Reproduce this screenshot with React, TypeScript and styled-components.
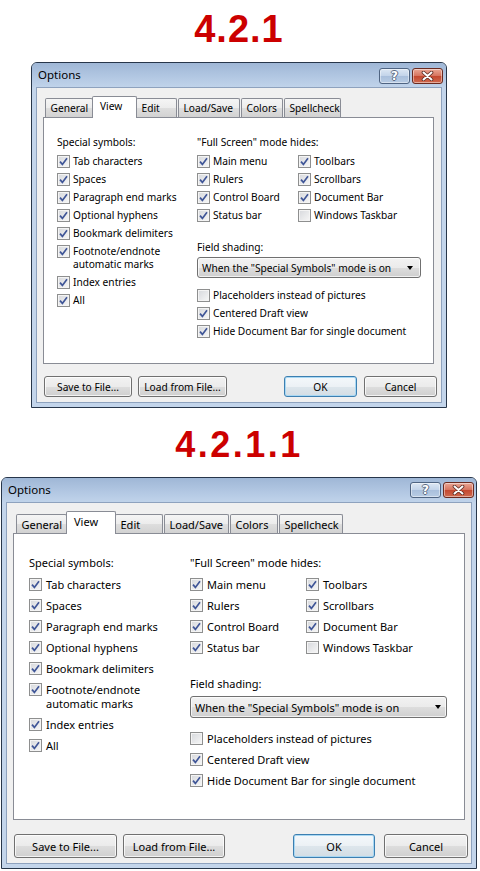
import React from 'react'
import styled, { createGlobalStyle } from 'styled-components'

type Size = 'sm' | 'lg'

interface Metrics {
  width: number
  font: number
  titleBtnTop: number
  titleBtnRight: number
  clientPadR: number
  stripH: number
  stripPadL: number
  inactiveH: number
  activeH: number
  tabs: number[]
  panelH: number
  panelPadT: number
  panelPadL: number
  leftColW: number
  subColW: number
  lineH: number
  rowPad: number
  cbGap: number
  fieldTop: number
  selectTop: number
  optsTop: number
  selectW: number
  selectH: number
  arrowPadR: number
  btnTop: number
  btnH: number
  save: number
  load: number
  leftGap: number
  ok: number
  cancel: number
  rightGap: number
}

const M: Record<Size, Metrics> = {
  sm: {
    width: 416,
    font: 10.2,
    titleBtnTop: 5,
    titleBtnRight: 3,
    clientPadR: 4,
    stripH: 21,
    stripPadL: 2,
    inactiveH: 19,
    activeH: 22,
    tabs: [48, 41, 41, 62, 42, 57],
    panelH: 247,
    panelPadT: 15,
    panelPadL: 13,
    leftColW: 140,
    subColW: 101,
    lineH: 13,
    rowPad: 2.5,
    cbGap: 3,
    fieldTop: 14,
    selectTop: 0,
    optsTop: 8,
    selectW: 224,
    selectH: 21,
    arrowPadR: 7,
    btnTop: 12,
    btnH: 21,
    save: 88,
    load: 89,
    leftGap: 6,
    ok: 73,
    cancel: 73,
    rightGap: 7,
  },
  lg: {
    width: 476,
    font: 11,
    titleBtnTop: 4,
    titleBtnRight: 2,
    clientPadR: 3,
    stripH: 22,
    stripPadL: 3,
    inactiveH: 19,
    activeH: 23,
    tabs: [51, 46, 48, 65, 48, 64],
    panelH: 287,
    panelPadT: 18,
    panelPadL: 15,
    leftColW: 161,
    subColW: 116,
    lineH: 14,
    rowPad: 3.5,
    cbGap: 4,
    fieldTop: 15,
    selectTop: 1,
    optsTop: 10,
    selectW: 257,
    selectH: 22,
    arrowPadR: 5,
    btnTop: 14,
    btnH: 24,
    save: 103,
    load: 102,
    leftGap: 6,
    ok: 82,
    cancel: 84,
    rightGap: 9,
  },
}

const GlobalStyle = createGlobalStyle`
  html, body {
    margin: 0;
    padding: 0;
    background: #ffffff;
  }
  body {
    font-family: "Noto Sans", "DejaVu Sans", sans-serif;
  }
`

const Page = styled.div`
  width: 480px;
  box-sizing: border-box;
  padding: 7px 2px 0 0;
  display: flex;
  flex-direction: column;
  align-items: center;
`

const Heading = styled.h1<{ $s: Size }>`
  margin: ${(p) => (p.$s === 'sm' ? '0 0 11px' : '15px 0 10px')};
  height: 44px;
  line-height: 44px;
  font-family: 'Liberation Sans', Arial, sans-serif;
  font-weight: bold;
  font-size: ${(p) => (p.$s === 'sm' ? 38 : 36)}px;
  letter-spacing: ${(p) => (p.$s === 'sm' ? 1 : 2.5)}px;
  color: #cc0000;
`

const Window = styled.div<{ $s: Size }>`
  width: ${(p) => M[p.$s].width}px;
  box-sizing: border-box;
  border: 1px solid #27364a;
  border-radius: 6px 6px 0 0;
  background: #c3d5eb;
  display: flex;
  flex-direction: column;
  color: #000;
  font-family: 'Noto Sans', 'DejaVu Sans', sans-serif;
`

const TitleBar = styled.div<{ $s: Size }>`
  height: 24px;
  display: flex;
  justify-content: space-between;
  align-items: flex-start;
  padding: 0 ${(p) => M[p.$s].titleBtnRight}px 0 6px;
  border-radius: 5px 5px 0 0;
  background: linear-gradient(#9fb7d6, #b3c8e3 60%, #c0d3ea);
`

const Title = styled.span`
  font-size: 11.5px;
  line-height: 24px;
`

const CaptionButtons = styled.div<{ $s: Size }>`
  display: flex;
  gap: 2px;
  margin-top: ${(p) => M[p.$s].titleBtnTop}px;
`

const CaptionButton = styled.div<{ $close?: boolean }>`
  width: 31px;
  height: 16px;
  box-sizing: border-box;
  border: 1px solid ${(p) => (p.$close ? '#6a2a20' : '#4f6482')};
  border-radius: 3px;
  background: ${(p) =>
    p.$close
      ? 'linear-gradient(#eaa795, #d6725d 50%, #c4472f 51%, #cf6a4f)'
      : 'linear-gradient(#dce7f4, #c2d3e9 50%, #a9bfdc 51%, #b8cce4)'};
  box-shadow: inset 0 0 0 1px rgba(255, 255, 255, 0.45);
  display: flex;
  align-items: center;
  justify-content: center;
  font-family: 'DejaVu Sans', sans-serif;
  font-weight: bold;
  font-size: 12px;
  color: #ffffff;
  text-shadow: 1px 0 #5b6b82, -1px 0 #5b6b82, 0 1px #5b6b82, 0 -1px #5b6b82;
`

const Client = styled.div<{ $s: Size }>`
  margin: 0 4px 4px;
  border: 1px solid #8ea2be;
  background: #f0f0f0;
  padding: 8px ${(p) => M[p.$s].clientPadR}px 5px 6px;
  display: flex;
  flex-direction: column;
`

const TabStrip = styled.div<{ $s: Size }>`
  height: ${(p) => M[p.$s].stripH}px;
  display: flex;
  align-items: flex-end;
  gap: 1px;
  padding-left: ${(p) => M[p.$s].stripPadL}px;
  position: relative;
  z-index: 1;
`

const Tab = styled.div<{ $s: Size; $w: number; $active?: boolean }>`
  flex: none;
  box-sizing: border-box;
  width: ${(p) => (p.$active ? p.$w + 4 : p.$w)}px;
  height: ${(p) => (p.$active ? M[p.$s].activeH : M[p.$s].inactiveH)}px;
  margin: ${(p) => (p.$active ? '0 -2px -1px -2px' : '0')};
  border: 1px solid #898c95;
  border-bottom: none;
  border-radius: 2px 2px 0 0;
  background: ${(p) =>
    p.$active ? '#ffffff' : 'linear-gradient(#f5f5f5, #ececec 50%, #dedede 51%, #d2d2d2)'};
  display: flex;
  align-items: center;
  padding: 0 0 ${(p) => (p.$active ? 3 : 0)}px ${(p) => (p.$active ? 7 : 4.5)}px;
  font-size: ${(p) => M[p.$s].font}px;
  white-space: nowrap;
`

const Panel = styled.div<{ $s: Size }>`
  height: ${(p) => M[p.$s].panelH}px;
  box-sizing: border-box;
  margin-right: 3px;
  border: 1px solid #898c95;
  background: #ffffff;
  padding: ${(p) => M[p.$s].panelPadT}px 0 0 ${(p) => M[p.$s].panelPadL}px;
  display: flex;
  font-size: ${(p) => M[p.$s].font}px;
`

const LeftColumn = styled.div<{ $s: Size }>`
  width: ${(p) => M[p.$s].leftColW}px;
  flex: none;
  display: flex;
  flex-direction: column;
`

const RightColumn = styled.div`
  flex: 1;
  display: flex;
  flex-direction: column;
`

const GroupLabel = styled.div<{ $s: Size; $top?: number }>`
  margin-top: ${(p) => p.$top ?? 0}px;
  padding: ${(p) => M[p.$s].rowPad}px 0 ${(p) => M[p.$s].rowPad + 1}px;
  line-height: ${(p) => M[p.$s].lineH}px;
  white-space: nowrap;
`

const OptionGrid = styled.div<{ $s: Size }>`
  display: grid;
  grid-template-columns: ${(p) => M[p.$s].subColW}px auto;
`

const OptionList = styled.div<{ $s: Size }>`
  margin-top: ${(p) => M[p.$s].optsTop}px;
  display: flex;
  flex-direction: column;
`

const Row = styled.div<{ $s: Size }>`
  display: flex;
  align-items: flex-start;
  gap: ${(p) => M[p.$s].cbGap}px;
  padding: ${(p) => M[p.$s].rowPad}px 0;
  line-height: ${(p) => M[p.$s].lineH}px;
  white-space: nowrap;
`

const Box = styled.span<{ $s: Size }>`
  flex: none;
  width: 13px;
  height: 13px;
  margin: ${(p) => (M[p.$s].lineH - 13) / 2}px 0;
  box-sizing: border-box;
  border: 1px solid #8e8f8f;
  background: linear-gradient(135deg, #d6d8dc, #f7f7f7);
  box-shadow: inset 0 0 0 1px #f4f4f4;
  display: flex;
  align-items: center;
  justify-content: center;
`

const Select = styled.div<{ $s: Size }>`
  margin-top: ${(p) => M[p.$s].selectTop}px;
  width: ${(p) => M[p.$s].selectW}px;
  height: ${(p) => M[p.$s].selectH}px;
  box-sizing: border-box;
  border: 1px solid #707070;
  border-radius: 3px;
  background: linear-gradient(#f2f2f2, #ebebeb 50%, #dddddd 51%, #cfcfcf);
  box-shadow: inset 0 0 0 1px rgba(255, 255, 255, 0.7);
  display: flex;
  align-items: center;
  justify-content: space-between;
  padding: 0 ${(p) => M[p.$s].arrowPadR}px 0 4px;
  white-space: nowrap;
`

const Arrow = styled.span`
  width: 0;
  height: 0;
  border-left: 3.5px solid transparent;
  border-right: 3.5px solid transparent;
  border-top: 4px solid #000;
`

const ButtonRow = styled.div<{ $s: Size }>`
  margin-top: ${(p) => M[p.$s].btnTop}px;
  display: flex;
  justify-content: space-between;
  padding-left: 1px;
`

const ButtonGroup = styled.div<{ $gap: number }>`
  display: flex;
  gap: ${(p) => p.$gap}px;
`

const Button = styled.div<{ $s: Size; $w: number; $default?: boolean }>`
  width: ${(p) => p.$w}px;
  height: ${(p) => M[p.$s].btnH}px;
  box-sizing: border-box;
  border: 1px solid ${(p) => (p.$default ? '#3c7fb1' : '#707070')};
  border-radius: 3px;
  background: ${(p) =>
    p.$default
      ? 'linear-gradient(#f4f8fb, #ecf1f5 50%, #dde6ec 51%, #d3dde4)'
      : 'linear-gradient(#f2f2f2, #ebebeb 50%, #dddddd 51%, #cfcfcf)'};
  box-shadow: inset 0 0 0 1px ${(p) => (p.$default ? '#a9d8f3' : 'rgba(255, 255, 255, 0.75)')};
  display: flex;
  align-items: center;
  justify-content: center;
  font-size: ${(p) => M[p.$s].font}px;
  white-space: nowrap;
`

const Check = () => (
  <svg width="9" height="9" viewBox="0 0 9 9">
    <path d="M1 4.6 L3.4 7.4 L8 1.2" fill="none" stroke="#3f5597" strokeWidth="1.7" />
  </svg>
)

const CloseGlyph = () => (
  <svg width="13" height="10" viewBox="0 0 13 10">
    <path d="M2.5 1.5 L10.5 8.5 M10.5 1.5 L2.5 8.5" stroke="#5a2a22" strokeWidth="3.6" strokeLinecap="round" />
    <path d="M2.5 1.5 L10.5 8.5 M10.5 1.5 L2.5 8.5" stroke="#ffffff" strokeWidth="2" strokeLinecap="round" />
  </svg>
)

interface CheckRowProps {
  s: Size
  checked?: boolean
  children: React.ReactNode
}

const CheckRow: React.FC<CheckRowProps> = ({ s, checked = true, children }) => (
  <Row $s={s}>
    <Box $s={s}>{checked && <Check />}</Box>
    <span>{children}</span>
  </Row>
)

const tabNames = ['General', 'View', 'Edit', 'Load/Save', 'Colors', 'Spellcheck']

const fullScreen: [string, boolean][] = [
  ['Main menu', true],
  ['Toolbars', true],
  ['Rulers', true],
  ['Scrollbars', true],
  ['Control Board', true],
  ['Document Bar', true],
  ['Status bar', true],
  ['Windows Taskbar', false],
]

const OptionsDialog: React.FC<{ s: Size }> = ({ s }) => {
  const m = M[s]
  return (
    <Window $s={s}>
      <TitleBar $s={s}>
        <Title>Options</Title>
        <CaptionButtons $s={s}>
          <CaptionButton>?</CaptionButton>
          <CaptionButton $close>
            <CloseGlyph />
          </CaptionButton>
        </CaptionButtons>
      </TitleBar>
      <Client $s={s}>
        <TabStrip $s={s}>
          {tabNames.map((name, i) => (
            <Tab key={name} $s={s} $w={m.tabs[i]} $active={name === 'View'}>
              {name}
            </Tab>
          ))}
        </TabStrip>
        <Panel $s={s}>
          <LeftColumn $s={s}>
            <GroupLabel $s={s}>Special symbols:</GroupLabel>
            <CheckRow s={s}>Tab characters</CheckRow>
            <CheckRow s={s}>Spaces</CheckRow>
            <CheckRow s={s}>Paragraph end marks</CheckRow>
            <CheckRow s={s}>Optional hyphens</CheckRow>
            <CheckRow s={s}>Bookmark delimiters</CheckRow>
            <CheckRow s={s}>
              Footnote/endnote
              <br />
              automatic marks
            </CheckRow>
            <CheckRow s={s}>Index entries</CheckRow>
            <CheckRow s={s}>All</CheckRow>
          </LeftColumn>
          <RightColumn>
            <GroupLabel $s={s}>"Full Screen" mode hides:</GroupLabel>
            <OptionGrid $s={s}>
              {fullScreen.map(([label, on]) => (
                <CheckRow key={label} s={s} checked={on}>
                  {label}
                </CheckRow>
              ))}
            </OptionGrid>
            <GroupLabel $s={s} $top={m.fieldTop}>
              Field shading:
            </GroupLabel>
            <Select $s={s}>
              <span>When the "Special Symbols" mode is on</span>
              <Arrow />
            </Select>
            <OptionList $s={s}>
              <CheckRow s={s} checked={false}>
                Placeholders instead of pictures
              </CheckRow>
              <CheckRow s={s}>Centered Draft view</CheckRow>
              <CheckRow s={s}>Hide Document Bar for single document</CheckRow>
            </OptionList>
          </RightColumn>
        </Panel>
        <ButtonRow $s={s}>
          <ButtonGroup $gap={m.leftGap}>
            <Button $s={s} $w={m.save}>
              Save to File...
            </Button>
            <Button $s={s} $w={m.load}>
              Load from File...
            </Button>
          </ButtonGroup>
          <ButtonGroup $gap={m.rightGap}>
            <Button $s={s} $w={m.ok} $default>
              OK
            </Button>
            <Button $s={s} $w={m.cancel}>
              Cancel
            </Button>
          </ButtonGroup>
        </ButtonRow>
      </Client>
    </Window>
  )
}

export default function App() {
  return (
    <>
      <GlobalStyle />
      <Page>
        <Heading $s="sm">4.2.1</Heading>
        <OptionsDialog s="sm" />
        <Heading $s="lg">4.2.1.1</Heading>
        <OptionsDialog s="lg" />
      </Page>
    </>
  )
}
